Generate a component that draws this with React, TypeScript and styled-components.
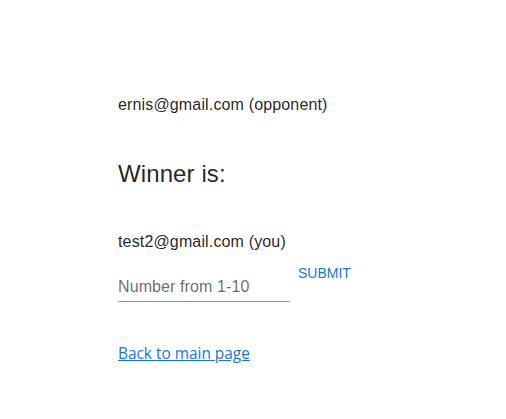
import React from "react";
import styled, { createGlobalStyle } from "styled-components";

const GlobalStyle = createGlobalStyle`
  html, body {
    margin: 0;
    padding: 0;
    background: #ffffff;
  }
  body {
    font-family: "Liberation Sans", Arial, Helvetica, sans-serif;
    color: rgba(0, 0, 0, 0.87);
  }
`;

const Page = styled.main`
  display: flex;
  flex-direction: column;
  align-items: flex-start;
  padding: 95px 0 40px 118px;
`;

const PlayerLine = styled.p<{ $gapTop?: number }>`
  margin: ${(p) => p.$gapTop ?? 0}px 0 0;
  font-size: 16px;
  line-height: 20px;
  letter-spacing: 0.15px;
`;

const Heading = styled.h2`
  margin: 45px 0 0;
  font-size: 24px;
  line-height: 28px;
  font-weight: 400;
  letter-spacing: 0.1px;
`;

const FormRow = styled.form`
  display: flex;
  align-items: flex-start;
  gap: 2px;
  margin-top: 1px;
`;

const Field = styled.div`
  position: relative;
  width: 172px;
  padding-top: 16px;
  display: flex;
  flex-direction: column;
`;

const FieldLabel = styled.label`
  position: absolute;
  left: 0;
  top: 22px;
  font-size: 16px;
  line-height: 23px;
  letter-spacing: 0.1px;
  color: rgba(0, 0, 0, 0.6);
  pointer-events: none;
`;

const Input = styled.input`
  box-sizing: content-box;
  height: 23px;
  padding: 4px 0 5px;
  border: 0;
  border-bottom: 1px solid rgba(0, 0, 0, 0.42);
  font: inherit;
  font-size: 16px;
  background: transparent;
  outline: none;
  width: 100%;
`;

const SubmitButton = styled.button`
  min-width: 64px;
  padding: 8px 6px 4px;
  border: 0;
  background: transparent;
  color: #1976d2;
  font-family: "Liberation Sans", Arial, sans-serif;
  font-size: 14px;
  line-height: 24.5px;
  font-weight: 400;
  text-transform: uppercase;
  letter-spacing: 0;
  cursor: pointer;
`;

const BackLink = styled.a`
  margin-top: 42px;
  font-family: "Open Sans", "Noto Sans", sans-serif;
  font-size: 15.4px;
  line-height: 20px;
  color: #1976d2;
  text-decoration: underline;
`;

export default function App() {
  return (
    <>
      <GlobalStyle />
      <Page>
        <PlayerLine>ernis@gmail.com (opponent)</PlayerLine>
        <Heading>Winner is:</Heading>
        <PlayerLine $gapTop={44}>test2@gmail.com (you)</PlayerLine>
        <FormRow onSubmit={(e) => e.preventDefault()}>
          <Field>
            <FieldLabel htmlFor="guess">Number from 1-10</FieldLabel>
            <Input id="guess" type="text" />
          </Field>
          <SubmitButton type="submit">Submit</SubmitButton>
        </FormRow>
        <BackLink href="#">Back to main page</BackLink>
      </Page>
    </>
  );
}
